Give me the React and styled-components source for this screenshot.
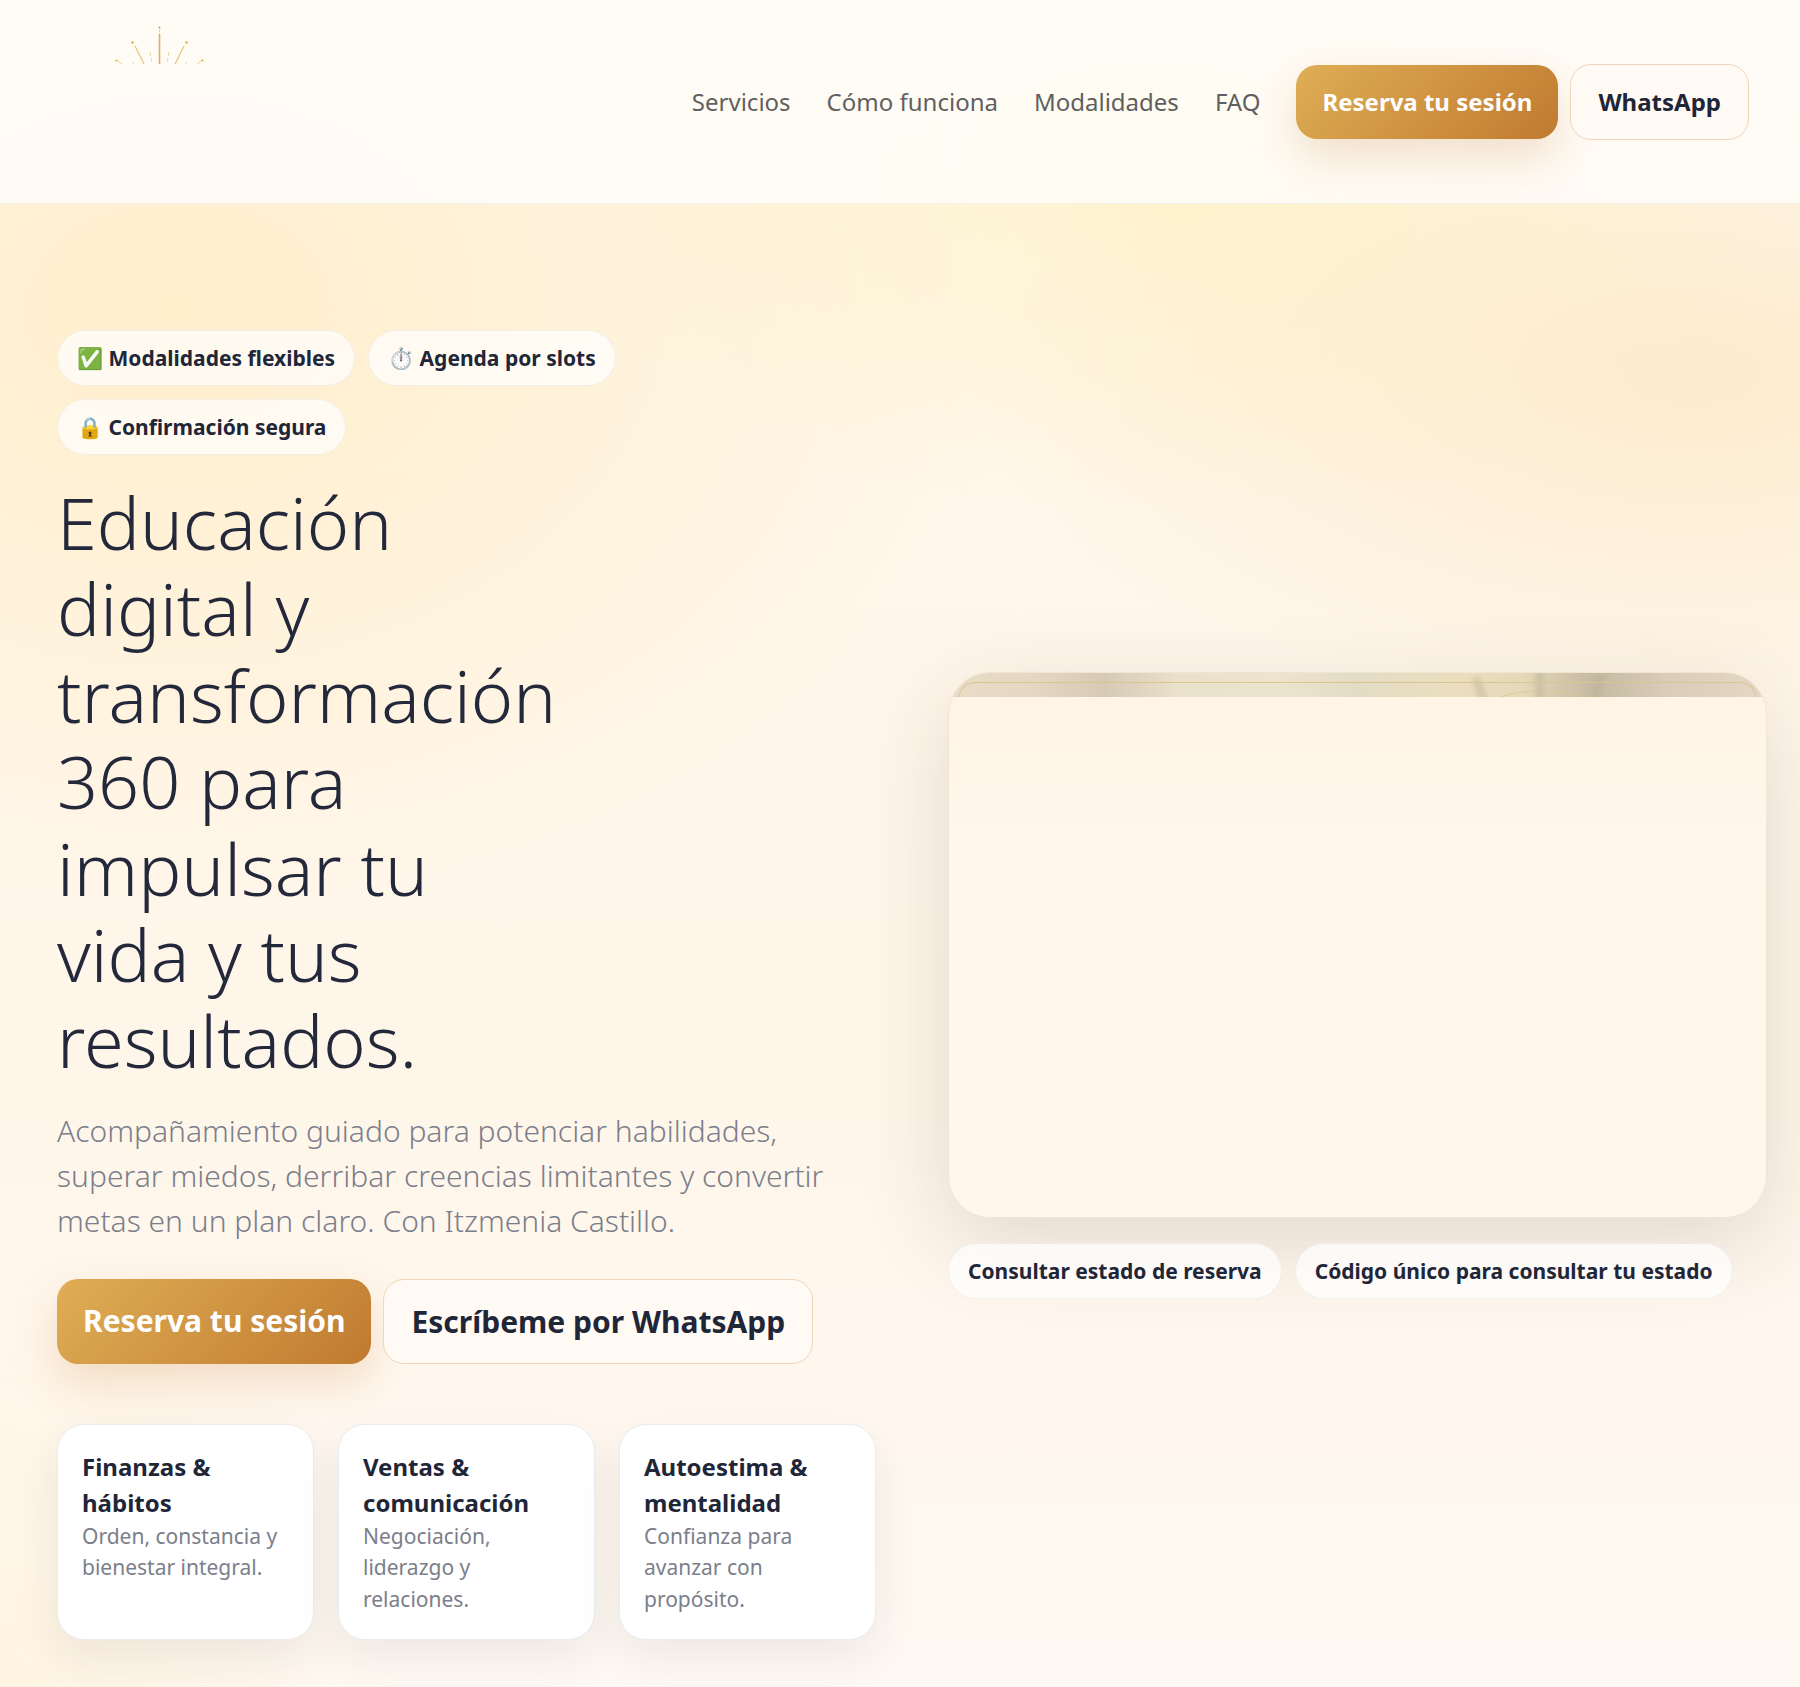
import styled, { createGlobalStyle } from 'styled-components'

const navLinks = [
  { href: '#servicios', label: 'Servicios' },
  { href: '#como-funciona', label: 'Cómo funciona' },
  { href: '#modalidades', label: 'Modalidades' },
  { href: '#faq', label: 'FAQ' },
]

const badges = ['✅ Modalidades flexibles', '⏱️ Agenda por slots', '🔒 Confirmación segura']

const areas = [
  { title: 'Finanzas & hábitos', text: 'Orden, constancia y bienestar integral.' },
  { title: 'Ventas & comunicación', text: 'Negociación, liderazgo y relaciones.' },
  { title: 'Autoestima & mentalidad', text: 'Confianza para avanzar con propósito.' },
]

export default function App() {
  return (
    <>
      <GlobalStyle />
      <Header>
        <Brand href="#inicio" aria-label="Inicio">
          <LogoRays />
        </Brand>
        <Nav>
          {navLinks.map((link) => (
            <NavLink key={link.href} href={link.href}>{link.label}</NavLink>
          ))}
          <Actions>
            <Button href="#reserva" $primary>Reserva tu sesión</Button>
            <Button href="#whatsapp">WhatsApp</Button>
          </Actions>
        </Nav>
      </Header>
      <Hero id="inicio">
        <Column>
          <Chips>
            {badges.map((badge) => <Chip key={badge}>{badge}</Chip>)}
          </Chips>
          <Title>Educación digital y transformación 360 para impulsar tu vida y tus resultados.</Title>
          <Lead>
            Acompañamiento guiado para potenciar habilidades, superar miedos, derribar creencias
            limitantes y convertir metas en un plan claro. Con Itzmenia Castillo.
          </Lead>
          <Actions $large>
            <Button href="#reserva" $primary>Reserva tu sesión</Button>
            <Button href="#whatsapp">Escríbeme por WhatsApp</Button>
          </Actions>
          <Areas>
            {areas.map((area) => (
              <Area key={area.title}>
                <AreaTitle>{area.title}</AreaTitle>
                <AreaText>{area.text}</AreaText>
              </Area>
            ))}
          </Areas>
        </Column>
        <Column>
          <Cover>
            <CoverArt />
          </Cover>
          <Chips>
            <Chip as="a" href="#estado">Consultar estado de reserva</Chip>
            <Chip>Código único para consultar tu estado</Chip>
          </Chips>
        </Column>
      </Hero>
    </>
  )
}

function LogoRays() {
  return (
    <svg width="96" height="40" viewBox="0 0 96 40" fill="none" stroke="#e2ae60" aria-hidden="true">
      <path d="M48.500 10v30" strokeWidth="1.600" />
      <path d="M48.500 3v7" strokeDasharray="2 1" opacity=".6" />
      <path d="M24 22l9 18M73 22l-9 18" strokeWidth="1.200" opacity=".75" />
      <path d="M39 28l2 12M58 28l-2 12" strokeDasharray="4 2" opacity=".5" />
      <path d="M7 37l4 3M90 37l-4 3" opacity=".6" />
      <path d="M21 38l2 2M76 38l-2 2" opacity=".5" />
      <g fill="#dfa850" stroke="none">
        <circle cx="48.500" cy="3.500" r="1" />
        <circle cx="21.500" cy="18.500" r="1.200" />
        <circle cx="75.500" cy="18.500" r="1.200" />
        <circle cx="5.500" cy="36.500" r="1.100" />
        <circle cx="91.500" cy="36.500" r="1.100" />
      </g>
    </svg>
  )
}

function CoverArt() {
  return (
    <CoverSvg viewBox="0 0 816 25" preserveAspectRatio="none" aria-hidden="true">
      <defs>
        <linearGradient id="cover-base">
          <stop offset="0" stopColor="#e9dcc6" />
          <stop offset=".1" stopColor="#e4d8c2" />
          <stop offset=".19" stopColor="#d6cab5" />
          <stop offset=".28" stopColor="#eae1ca" />
          <stop offset=".4" stopColor="#ede4cd" />
          <stop offset=".5" stopColor="#e3dcc5" />
          <stop offset=".62" stopColor="#eadebe" />
          <stop offset=".7" stopColor="#e4d9b8" />
          <stop offset=".79" stopColor="#c5baa2" />
          <stop offset=".88" stopColor="#d9ccb8" />
          <stop offset="1" stopColor="#e4d7c3" />
        </linearGradient>
        <filter id="cover-soft">
          <feGaussianBlur stdDeviation="2" />
        </filter>
      </defs>
      <path fill="url(#cover-base)" d="M0 0h816v25H0z" />
      <g fill="none" stroke="#b9af93" strokeWidth="8" opacity=".42" filter="url(#cover-soft)">
        <path d="M526 5q3 10 10 28M590 -4v34M652 3q-3 10-8 28" />
      </g>
      <g fill="none" stroke="#dcc392">
        <path d="M10 25q2-15 17-15h762q15 0 17 15" />
        <path d="M550 25q40-13 88 0" opacity=".7" />
      </g>
    </CoverSvg>
  )
}

const GlobalStyle = createGlobalStyle`
  * {
    box-sizing: border-box;
  }
  body {
    margin: 0;
    min-height: 100vh;
    font-family: "Noto Sans", sans-serif;
    font-size: 24px;
    line-height: 1.5;
    color: #1f2638;
    background:
      radial-gradient(1050px 760px at 10% 18%, rgba(255, 224, 145, 0.36), transparent 80%),
      radial-gradient(760px 440px at 64% 10%, rgba(254, 238, 160, 0.4), transparent 80%),
      radial-gradient(900px 440px at 94% 22%, rgba(246, 214, 145, 0.34), transparent 80%),
      radial-gradient(500px 500px at 0% 100%, rgba(255, 228, 165, 0.22), transparent 80%),
      linear-gradient(#fff7ec 0%, #fff6ea 65%, #fff9f3 100%);
  }
`
const Header = styled.header`
  display: flex;
  align-items: center;
  justify-content: space-between;
  min-height: 204px;
  padding: 24px 51px;
  background: rgba(255, 253, 249, 0.86);
  border-bottom: 1px solid rgba(31, 38, 56, 0.06);
`
const Brand = styled.a`
  display: block;
  align-self: stretch;
  padding-left: 60px;
`
const Nav = styled.nav`
  display: flex;
  align-items: center;
  gap: 36px;
`
const NavLink = styled.a`
  color: #5f5f5f;
  text-decoration: none;
`
const Actions = styled.div`
  display: flex;
  gap: 12px;
  align-items: ${(props) => (props.$large ? 'stretch' : 'center')};
  font-size: ${(props) => (props.$large ? '30px' : '24px')};
  margin-bottom: ${(props) => (props.$large ? '60px' : '0')};
`
const Button = styled.a`
  padding: ${(props) => (props.$primary ? '19px 26px' : '19px 27px')};
  border-radius: 21px;
  border: ${(props) => (props.$primary ? '0' : '1px solid #f0d5b8')};
  background: ${(props) => (props.$primary ? 'linear-gradient(135deg, #dfae55, #c07a30)' : '#fffaf3')};
  box-shadow: ${(props) => (props.$primary ? '0 18px 45px rgba(192, 122, 48, 0.22)' : 'none')};
  color: ${(props) => (props.$primary ? '#fff' : '#1f2638')};
  font-weight: 700;
  text-decoration: none;
  white-space: nowrap;
`
const Hero = styled.main`
  display: grid;
  grid-template-columns: 1fr 1fr;
  align-items: center;
  gap: 72px;
  padding: 126px 33px 47px 57px;
`
const Column = styled.section`
  min-width: 0;
`
const Chips = styled.div`
  display: flex;
  flex-wrap: wrap;
  gap: 13px;
`
const Chip = styled.span`
  padding: 11px 19px;
  border: 1px solid rgba(31, 38, 56, 0.06);
  border-radius: 28px;
  background: rgba(255, 255, 255, 0.7);
  color: #1f2638;
  font-size: 21px;
  line-height: 32px;
  font-weight: 700;
  text-decoration: none;
`
const Title = styled.h1`
  max-width: 520px;
  margin: 24px 0;
  color: #24283b;
  font-size: 72px;
  font-weight: 300;
  line-height: 1.2;
`
const Lead = styled.p`
  margin: 0 0 36px;
  color: #7b7e8b;
  font-size: 30px;
  font-weight: 300;
`
const Areas = styled.div`
  display: grid;
  grid-template-columns: repeat(3, 1fr);
  gap: 24px;
`
const Area = styled.article`
  padding: 24px;
  border: 1px solid #ebebee;
  border-radius: 27px;
  background: #fff;
  box-shadow: 0 18px 45px rgba(31, 38, 56, 0.08);
`
const AreaTitle = styled.h2`
  margin: 0;
  font-size: 24px;
  font-weight: 700;
`
const AreaText = styled.p`
  margin: 0;
  color: #7b7e8b;
  font-size: 21px;
`
const Cover = styled.div`
  position: relative;
  z-index: -1;
  aspect-ratio: 3 / 2;
  margin-bottom: 25px;
  overflow: hidden;
  border: 1px solid #f2e4d2;
  border-radius: 42px;
  background: linear-gradient(#fff4e4, #fff6ec 30%);
  box-shadow: 0 27px 90px rgba(50, 42, 30, 0.14);
`
const CoverSvg = styled.svg`
  display: block;
  width: 100%;
  height: 24px;
`
